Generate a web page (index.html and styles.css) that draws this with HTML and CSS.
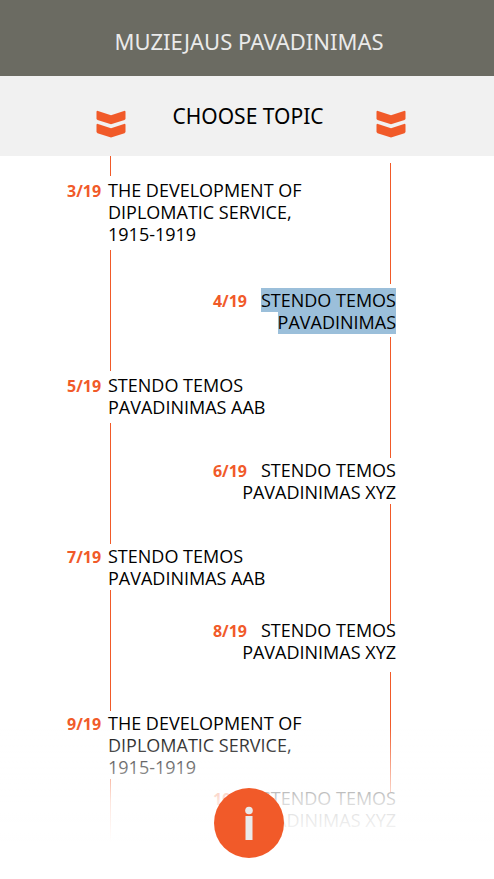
FILE: index.html
```html
<!DOCTYPE html>
<html lang="lt">
<head>
<meta charset="utf-8">
<meta name="viewport" content="width=device-width, initial-scale=1">
<title>Muziejaus pavadinimas</title>
<link rel="stylesheet" href="styles.css">
</head>
<body>
<header class="site-header"><h1 class="site-title">MUZIEJAUS PAVADINIMAS</h1></header>
<div class="topic-bar">
  <svg class="chevrons" viewBox="0 0 30 28" aria-hidden="true"><path d="M1.200 .8 15 5.300 28.800 .8 29.500 1.500V9L28.500 10 15 14.200 1.500 10 .5 9V1.500ZM1.200 13.800 15 18.300 28.800 13.800 29.500 14.500V22L28.500 23.200 15 27.500 1.500 23.200 .5 22V14.500Z"/></svg>
  <h2 class="topic-title">CHOOSE TOPIC</h2>
  <svg class="chevrons" viewBox="0 0 30 28" aria-hidden="true"><path d="M1.200 .8 15 5.300 28.800 .8 29.500 1.500V9L28.500 10 15 14.200 1.500 10 .5 9V1.500ZM1.200 13.800 15 18.300 28.800 13.800 29.500 14.500V22L28.500 23.200 15 27.500 1.500 23.200 .5 22V14.500Z"/></svg>
</div>
<main class="topics">
  <ol class="track track-left">
    <li class="topic loose"><a href="#t3"><span class="num">3/19</span><span class="name">THE DEVELOPMENT OF<br>DIPLOMATIC SERVICE,<br>1915-1919</span></a></li>
    <li class="topic loose"><a href="#t5"><span class="num">5/19</span><span class="name">STENDO TEMOS<br>PAVADINIMAS AAB</span></a></li>
    <li class="topic"><a href="#t7"><span class="num">7/19</span><span class="name">STENDO TEMOS<br>PAVADINIMAS AAB</span></a></li>
    <li class="topic"><a href="#t9"><span class="num">9/19</span><span class="name">THE DEVELOPMENT OF<br>DIPLOMATIC SERVICE,<br>1915-1919</span></a></li>
  </ol>
  <ol class="track track-right">
    <li class="topic loose"><a href="#t4"><span class="num">4/19</span><span class="name selected">STENDO TEMOS<br>PAVADINIMAS</span></a></li>
    <li class="topic"><a href="#t6"><span class="num">6/19</span><span class="name">STENDO TEMOS<br>PAVADINIMAS XYZ</span></a></li>
    <li class="topic raised"><a href="#t8"><span class="num">8/19</span><span class="name">STENDO TEMOS<br>PAVADINIMAS XYZ</span></a></li>
    <li class="topic raised"><a href="#t10"><span class="num">10/19</span><span class="name">STENDO TEMOS<br>PAVADINIMAS XYZ</span></a></li>
  </ol>
</main>
<footer class="fade">
  <button class="info" type="button" aria-label="Info"><svg viewBox="0 0 70 70" aria-hidden="true"><circle cx="35" cy="22.500" r="3.800"/><path d="M31.500 28h7v24h-7z"/></svg></button>
</footer>
</body>
</html>
```
FILE: styles.css
```css
* { box-sizing: border-box; }
body {
  margin: 0;
  height: 100vh;
  overflow: hidden;
  display: flex;
  flex-direction: column;
  background: #fff;
  color: #000;
  font-family: "Open Sans", sans-serif;
}
h1, h2 {
  margin: 0;
  font-family: "Noto Sans", sans-serif;
  font-weight: 400;
}
.site-header {
  flex: none;
  height: 76px;
  padding: 26px 0 0 4px;
  background: #6b6b62;
  color: #eaeaea;
  text-align: center;
}
.site-title { font-size: 22px; line-height: 30px; }
.topic-bar {
  flex: none;
  height: 80px;
  padding: 0 88px 0 96px;
  display: flex;
  align-items: center;
  justify-content: space-between;
  background: #f1f1f1;
}
.topic-title { padding-right: 6px; font-size: 21px; line-height: 30px; }
.chevrons { width: 30px; height: 28px; margin-top: 16px; fill: #f15a29; }
.topics {
  flex: 1;
  min-height: 0;
  display: grid;
  padding: 0 98px 0 67px;
}
.track {
  grid-area: 1 / 1;
  margin: 0;
  padding: 0;
  list-style: none;
  font-size: 18px;
  line-height: 22px;
}
.track-left { justify-self: start; }
.track-right { justify-self: end; text-align: right; padding-top: 7px; }
.topic { display: flow-root; }
.topic::before, .topic:last-child::after {
  content: "";
  display: block;
  width: 1px;
  height: 121px;
  background: #f15a29;
}
.track-left .topic::before, .track-left .topic::after { margin-left: 43px; }
.track-right .topic::before { margin-left: auto; margin-right: 5px; }
.track-right .topic:last-child::after { display: none; }
.track-left .topic:first-child::before { height: 20px; }
.topic a { display: block; margin: 1px 0; color: inherit; text-decoration: none; }
.track-left a { display: flex; align-items: baseline; }
.topic.loose a { margin: 3px 0 5px; }
.track-right .topic.loose a { margin: 5px 0 4px; }
.topic.raised a { margin: -6px 0 9px; }
.num {
  display: inline-block;
  width: 41px;
  color: #f15a29;
  font-size: 16px;
  line-height: 16px;
  font-weight: 700;
}
.track-right .num { width: 48px; text-align: left; }
.selected { background: #9bbfda; }
.fade {
  position: fixed;
  inset: auto 0 0;
  height: 154px;
  padding-top: 63px;
  text-align: center;
  background: linear-gradient(rgba(255, 255, 255, 0), rgba(255, 255, 255, .85) 50%, #fff 76%);
}
.info {
  width: 70px;
  height: 70px;
  margin-left: 3px;
  padding: 0;
  border: 0;
  border-radius: 50%;
  background: #f15a29;
}
.info svg { display: block; width: 70px; height: 70px; fill: #eaeaea; }
```
